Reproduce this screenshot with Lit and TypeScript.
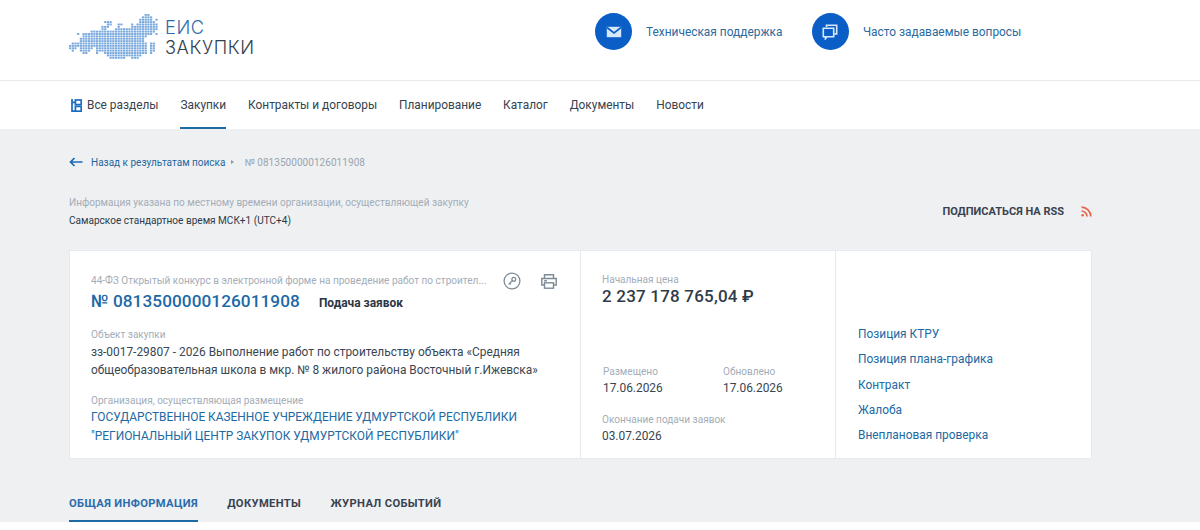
import { LitElement, html, css, svg } from 'lit';
import { customElement } from 'lit/decorators.js';

// dotted map rows: [from, to] column spans
const MAP_ROWS: number[][][] = [
  [[28, 29]],
  [[27, 30]],
  [[26, 30], [32, 32]],
  [[13, 15], [26, 31]],
  [[14, 15], [18, 19], [23, 23], [25, 32]],
  [[12, 14], [18, 18], [23, 23], [24, 32]],
  [[12, 13], [17, 32]],
  [[8, 11], [12, 31]],
  [[3, 3], [5, 30], [32, 32]],
  [[5, 28]],
  [[4, 27]],
  [[4, 27]],
  [[1, 3], [4, 28], [30, 31]],
  [[0, 3], [4, 28], [30, 31]],
  [[0, 2], [4, 8], [10, 28], [30, 31]],
  [[1, 1], [4, 7], [10, 28], [30, 31]],
  [[5, 6], [10, 10], [13, 28], [30, 30]],
  [[14, 26]],
  [[15, 20], [23, 25]],
];

@customElement('app-root')
export class AppRoot extends LitElement {
  static styles = css`
    :host {
      display: block;
      height: 530px;
      overflow: hidden;
      background: #eff0f2;
      font-family: Roboto, "Liberation Sans", sans-serif;
      color: #2b3a4a;
    }
    a { color: inherit; text-decoration: none; }
    .top {
      height: 80px;
      background: #fff;
      border-bottom: 1px solid #e6e9ed;
      display: flex;
      align-items: flex-start;
      padding-left: 69px;
    }
    .logo { display: flex; align-items: flex-start; gap: 7px; width: 526px; padding-top: 14px; }
    .logo-text {
      font-family: Inter, Roboto, sans-serif;
      font-size: 18.2px;
      line-height: 20px;
      letter-spacing: 0.6px;
      font-weight: 300;
      color: #33404e;
      margin-top: 3px;
    }
    .logo-text div:first-child { color: #2f6aa8; }
    .help { display: flex; align-items: center; font-size: 11.9px; color: #2b6a9e; margin-top: 13px; }
    .help + .help { margin-left: 29.5px; }
    .circle {
      width: 37px;
      height: 37px;
      border-radius: 50%;
      background: #0a5ec6;
      display: flex;
      align-items: center;
      justify-content: center;
      margin-right: 14px;
    }
    .nav {
      height: 48px;
      background: #fff;
      display: flex;
      padding-left: 71px;
      font-size: 11.88px;
      color: #36434f;
      gap: 21.9px;
    }
    .nav a {
      display: flex;
      align-items: center;
      gap: 5px;
      border-top: 2px solid transparent;
      border-bottom: 2px solid transparent;
    }
    .nav a.active { border-bottom-color: #1d6aa5; }
    .content { padding: 26px 108px 0 69px; }
    .crumbs { display: flex; align-items: center; font-size: 10px; height: 14px; color: #1f679f; }
    .crumbs svg { margin-right: 8px; }
    .crumbs .sep {
      width: 0;
      height: 0;
      border-left: 3px solid #8b98a5;
      border-top: 2.5px solid transparent;
      border-bottom: 2.5px solid transparent;
      margin: 0 10px 0 6px;
    }
    .crumbs .cur { color: #9aa5b1; letter-spacing: 0.05px; }
    .info { display: flex; justify-content: space-between; align-items: center; margin-top: 25px; }
    .tz-note { font-size: 10.05px; line-height: 18px; color: #a3adb8; }
    .tz { font-size: 10.05px; line-height: 18px; color: #2b3a4a; }
    .rss {
      display: flex;
      align-items: center;
      gap: 17px;
      font-size: 11px;
      font-weight: 700;
      color: #39434f;
      padding-bottom: 2px;
    }
    .card {
      margin-top: 20px;
      height: 209px;
      box-sizing: border-box;
      background: #fff;
      border: 1px solid #e6e9ed;
      display: grid;
      grid-template-columns: 510px 255px 1fr;
    }
    .col { border-left: 1px solid #e6e9ed; }
    .col:first-child { border-left: 0; padding: 22px 22px 0 21px; }
    .col.price { padding: 22px 0 0 21px; }
    .col.links {
      padding: 0 0 14px 22px;
      display: flex;
      flex-direction: column;
      justify-content: flex-end;
      gap: 7.2px;
      font-size: 11.9px;
      line-height: 18px;
      color: #2069a3;
    }
    .head { display: flex; align-items: center; }
    .type {
      font-size: 10.05px;
      color: #a3adb8;
      width: 396px;
      margin-top: -2px;
      white-space: nowrap;
    }
    .tools { display: flex; align-items: center; gap: 20px; margin-left: 16px; margin-top: -1px; }
    .num-row { display: flex; align-items: baseline; margin-top: 1px; }
    .num { font-size: 17.2px; font-weight: 500; color: #1b69a6; letter-spacing: 0.07px; }
    .status {
      font-size: 11.95px;
      font-weight: 700;
      color: #2b3644;
      margin-left: 19px;
      align-self: flex-end;
      padding-bottom: 1px;
    }
    .label { font-size: 10.05px; line-height: 14px; color: #a3adb8; }
    .text { font-size: 11.9px; line-height: 18px; color: #3a4652; }
    .object { margin-top: 17px; }
    .object .text { margin-top: 1px; }
    .org { margin-top: 15px; }
    .org-name { display: block; font-size: 11.9px; line-height: 19px; color: #2069a3; }
    .price-value { font-size: 17px; font-weight: 500; color: #2f3b48; letter-spacing: 0.2px; line-height: 19px; }
    .dates { display: grid; grid-template-columns: 120px 1fr; margin-top: 59px; padding-left: 1px; }
    .end { margin-top: 16px; }
    .tabs {
      display: flex;
      gap: 29.4px;
      margin-top: 37px;
      font-size: 11.2px;
      font-weight: 700;
      letter-spacing: 0.35px;
      color: #39434f;
    }
    .tabs a { padding-bottom: 9px; border-bottom: 2px solid transparent; line-height: 15px; }
    .tabs a.active { color: #2a6cab; border-bottom-color: #1d6aa5; }
    .below { height: 20px; background: #fff; }
  `;

  map() {
    const dots = MAP_ROWS.flatMap((spans, r) =>
      spans.flatMap(([a, b]) => {
        const out = [];
        for (let c = a; c <= b; c++) {
          out.push(svg`<rect x=${c * 2.7} y=${r * 2.38} width="2.2" height="1.9"/>`);
        }
        return out;
      })
    );
    return html`<svg width="89" height="46" viewBox="0 0 89 46" fill="#78a8dd">${dots}</svg>`;
  }

  render() {
    return html`
      <div class="top">
        <div class="logo">
          ${this.map()}
          <div class="logo-text"><div>ЕИС</div><div>ЗАКУПКИ</div></div>
        </div>
        <a class="help">
          <span class="circle">
            <svg width="16" height="12" viewBox="0 0 16 12"><rect x="0.8" y="0.8" width="14.4" height="10.4" fill="#d7e8fb"/><path d="M1 1.5 8 7l7-5.5" fill="none" stroke="#0a5ec6" stroke-width="1.6"/></svg>
          </span>
          Техническая поддержка
        </a>
        <a class="help">
          <span class="circle">
            <svg width="16" height="16" viewBox="0 0 16 16" fill="none" stroke="#d7e8fb" stroke-width="1.6"><path d="M4.5 3V1.3h10.2v8.6H12.3"/><path d="M1.3 4.3h10.4v8.4H5l-1.6 2v-2H1.3z"/></svg>
          </span>
          Часто задаваемые вопросы
        </a>
      </div>
      <div class="nav">
        <a>
          <svg width="11" height="13" viewBox="0 0 11 13" fill="none" stroke="#1a6cc0" stroke-width="1.7"><path d="M1 0v12.2h3M1 3.4h3"/><rect x="4.4" y="1" width="5.8" height="4.6"/><rect x="4.4" y="7.4" width="5.8" height="4.8"/></svg>
          Все разделы
        </a>
        <a class="active">Закупки</a>
        <a>Контракты и договоры</a>
        <a>Планирование</a>
        <a>Каталог</a>
        <a>Документы</a>
        <a>Новости</a>
      </div>
      <div class="content">
        <div class="crumbs">
          <svg width="14" height="10" viewBox="0 0 14 10" fill="none" stroke="#1b69b5" stroke-width="1.7"><path d="M13.5 5H1.5M5.5 1l-4 4 4 4"/></svg>
          <a>Назад к результатам поиска</a>
          <span class="sep"></span>
          <span class="cur">№ 0813500000126011908</span>
        </div>
        <div class="info">
          <div>
            <div class="tz-note">Информация указана по местному времени организации, осуществляющей закупку</div>
            <div class="tz">Самарское стандартное время МСК+1 (UTC+4)</div>
          </div>
          <div class="rss">
            ПОДПИСАТЬСЯ НА RSS
            <svg width="11" height="11" viewBox="0 0 11 11" fill="none" stroke="#e2674a" stroke-width="1.7"><path d="M0.5 1.2c5 0 9.3 4.3 9.3 9.3M0.5 5c3 0 5.5 2.5 5.5 5.5"/><circle cx="1.7" cy="9.3" r="1.3" fill="#e2674a" stroke="none"/></svg>
          </div>
        </div>
        <div class="card">
          <div class="col">
            <div class="head">
              <div class="type">44-ФЗ Открытый конкурс в электронной форме на проведение работ по строител...</div>
              <div class="tools">
                <svg width="18" height="18" viewBox="0 0 18 18" fill="none" stroke="#7d8a97" stroke-width="1.3"><circle cx="9" cy="9" r="7.9"/><circle cx="10.8" cy="7.2" r="1.9"/><path d="M9.4 8.6 5.6 12.4M6.8 11.2l1.2 1.2"/></svg>
                <svg width="16" height="15" viewBox="0 0 16 15" fill="none" stroke="#7d8a97" stroke-width="1.4"><path d="M3.5 4.5V0.8h9v3.7"/><path d="M3.5 11H0.8V4.5h14.4V11h-2.7"/><rect x="3.5" y="8.8" width="9" height="5.4"/><path d="M3 6.8h3"/></svg>
              </div>
            </div>
            <div class="num-row">
              <a class="num">№ 0813500000126011908</a>
              <span class="status">Подача заявок</span>
            </div>
            <div class="object">
              <div class="label">Объект закупки</div>
              <div class="text">зз-0017-29807 - 2026 Выполнение работ по строительству объекта «Средняя<br />общеобразовательная школа в мкр. № 8 жилого района Восточный г.Ижевска»</div>
            </div>
            <div class="org">
              <div class="label">Организация, осуществляющая размещение</div>
              <a class="org-name">ГОСУДАРСТВЕННОЕ КАЗЕННОЕ УЧРЕЖДЕНИЕ УДМУРТСКОЙ РЕСПУБЛИКИ<br />"РЕГИОНАЛЬНЫЙ ЦЕНТР ЗАКУПОК УДМУРТСКОЙ РЕСПУБЛИКИ"</a>
            </div>
          </div>
          <div class="col price">
            <div class="label">Начальная цена</div>
            <div class="price-value">2 237 178 765,04 ₽</div>
            <div class="dates">
              <div>
                <div class="label">Размещено</div>
                <div class="text">17.06.2026</div>
              </div>
              <div>
                <div class="label">Обновлено</div>
                <div class="text">17.06.2026</div>
              </div>
            </div>
            <div class="end">
              <div class="label">Окончание подачи заявок</div>
              <div class="text">03.07.2026</div>
            </div>
          </div>
          <div class="col links">
            <a>Позиция КТРУ</a>
            <a>Позиция плана-графика</a>
            <a>Контракт</a>
            <a>Жалоба</a>
            <a>Внеплановая проверка</a>
          </div>
        </div>
        <div class="tabs">
          <a class="active">ОБЩАЯ ИНФОРМАЦИЯ</a>
          <a>ДОКУМЕНТЫ</a>
          <a>ЖУРНАЛ СОБЫТИЙ</a>
        </div>
      </div>
      <div class="below"></div>
    `;
  }
}
